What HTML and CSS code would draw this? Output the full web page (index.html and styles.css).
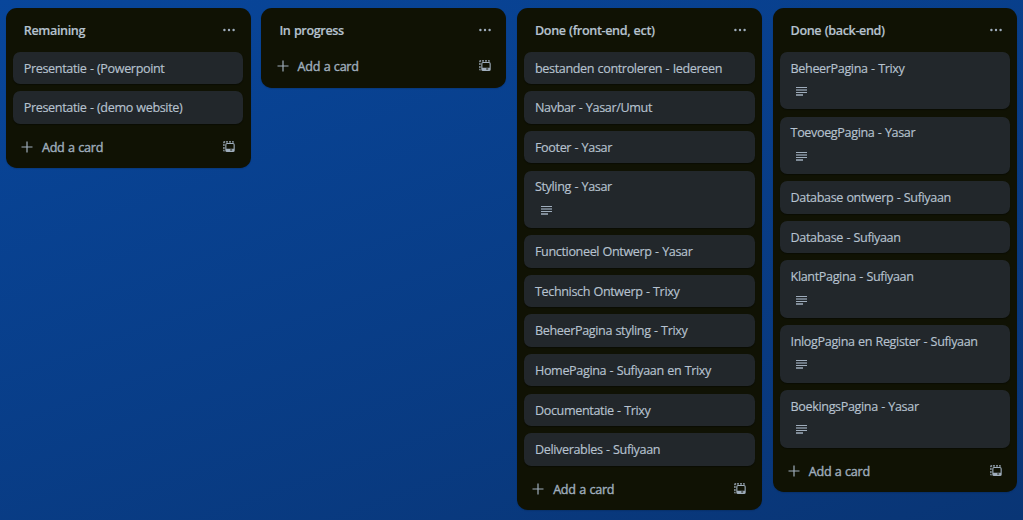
FILE: index.html
```
<!DOCTYPE html>
<html lang="nl">
<head>
<meta charset="utf-8">
<title>Board</title>
<link rel="stylesheet" href="styles.css">
</head>
<body>
<svg class="sprite" aria-hidden="true">
  <symbol id="dots" viewBox="0 0 12 4"><circle cx="1.4" cy="2" r="1.2"/><circle cx="6" cy="2" r="1.2"/><circle cx="10.6" cy="2" r="1.2"/></symbol>
  <symbol id="plus" viewBox="0 0 12 12"><path d="M5.4 .5h1.2v4.9h4.9v1.2H6.6v4.9H5.4V6.6H.5V5.4h4.9z"/></symbol>
  <symbol id="lines" viewBox="0 0 11 10"><path d="M0 0h11v1H0zM0 5h11v1H0zM0 7.200h7v1.500H0z"/><path opacity=".6" d="M0 2h11v2H0z"/></symbol>
  <symbol id="template" viewBox="0 0 12 12"><path d="M.3 2.200V1Q.3.3 1 .3h1.200v1.200H1.500v.7zM3 .3h2v1.200H3zM6 .3h2v1.200H6zM9 .3h1.200q.8 0 .8.700v.5H9zM.3 3h1.200v2H.3zM.3 6h1.200v2H.3zM.3 8.800h1.200v1.700H1Q.3 10.500.3 9.800z"/><path fill-rule="evenodd" d="M4 2h6q1.700 0 1.700 1.700v5.700q0 1.600-1.700 1.600H4q-1.700 0-1.700-1.600V3.700Q2.300 2 4 2zM4 3.100q-.600 0-.600.600V7.700h7.200V3.700q0-.600-.600-.600zM7.200 8.500v1.100h2V8.500z"/></symbol>
</svg>
<main class="board">
  <section class="list">
    <header class="list-header"><h2>Remaining</h2><svg class="dots"><use href="#dots"/></svg></header>
    <article class="card">Presentatie - (Powerpoint</article>
    <article class="card">Presentatie - (demo website)</article>
    <footer class="list-footer"><svg class="icon"><use href="#plus"/></svg><span>Add a card</span><svg class="icon"><use href="#template"/></svg></footer>
  </section>
  <section class="list">
    <header class="list-header"><h2>In progress</h2><svg class="dots"><use href="#dots"/></svg></header>
    <footer class="list-footer"><svg class="icon"><use href="#plus"/></svg><span>Add a card</span><svg class="icon"><use href="#template"/></svg></footer>
  </section>
  <section class="list">
    <header class="list-header"><h2>Done (front-end, ect)</h2><svg class="dots"><use href="#dots"/></svg></header>
    <article class="card">bestanden controleren - Iedereen</article>
    <article class="card">Navbar - Yasar/Umut</article>
    <article class="card">Footer - Yasar</article>
    <article class="card">Styling - Yasar<svg class="lines"><use href="#lines"/></svg></article>
    <article class="card">Functioneel Ontwerp - Yasar</article>
    <article class="card">Technisch Ontwerp - Trixy</article>
    <article class="card">BeheerPagina styling - Trixy</article>
    <article class="card">HomePagina - Sufiyaan en Trixy</article>
    <article class="card">Documentatie - Trixy</article>
    <article class="card">Deliverables - Sufiyaan</article>
    <footer class="list-footer"><svg class="icon"><use href="#plus"/></svg><span>Add a card</span><svg class="icon"><use href="#template"/></svg></footer>
  </section>
  <section class="list">
    <header class="list-header"><h2>Done (back-end)</h2><svg class="dots"><use href="#dots"/></svg></header>
    <article class="card">BeheerPagina - Trixy<svg class="lines"><use href="#lines"/></svg></article>
    <article class="card">ToevoegPagina - Yasar<svg class="lines"><use href="#lines"/></svg></article>
    <article class="card">Database ontwerp - Sufiyaan</article>
    <article class="card">Database - Sufiyaan</article>
    <article class="card">KlantPagina - Sufiyaan<svg class="lines"><use href="#lines"/></svg></article>
    <article class="card">InlogPagina en Register - Sufiyaan<svg class="lines"><use href="#lines"/></svg></article>
    <article class="card">BoekingsPagina - Yasar<svg class="lines"><use href="#lines"/></svg></article>
    <footer class="list-footer"><svg class="icon"><use href="#plus"/></svg><span>Add a card</span><svg class="icon"><use href="#template"/></svg></footer>
  </section>
</main>
</body>
</html>
```
FILE: styles.css
```
* { box-sizing: border-box; }
body {
  margin: 0;
  height: 520px;
  overflow: hidden;
  background: linear-gradient(160deg, #08469b 0%, #093575 100%);
  font: 12.6px/18px "Segoe UI", "Open Sans", "Noto Sans", sans-serif;
  letter-spacing: -0.37px;
  word-spacing: 0.5px;
  color: #b6c2cf;
  -webkit-text-stroke: 0.15px currentColor;
}
.sprite { display: none; }
.board {
  display: flex;
  align-items: flex-start;
  gap: 10.8px;
  padding: 8px 0 0 5.8px;
}
.list {
  flex: 0 0 244.8px;
  padding: 0 7.2px;
  border-radius: 10.8px;
  background: #101204;
  box-shadow: 0 1px 1px #091e4240;
}
.list-header {
  display: flex;
  align-items: center;
  justify-content: space-between;
  height: 43.8px;
  padding: 0 8.3px 0 10.8px;
}
h2 {
  margin: 0;
  padding-top: 1.4px;
  font-size: 12.6px;
  line-height: 18px;
  font-weight: 600;
}
svg { fill: #9fadbc; }
.dots { width: 12px; height: 4px; }
.card {
  min-height: 32.4px;
  margin-bottom: 7.2px;
  padding: 7.9px 10.8px 6.5px;
  border-radius: 7.2px;
  background: #22272b;
  box-shadow: 0 1px 1px #03040466;
}
.lines {
  display: block;
  width: 11px;
  height: 10px;
  margin: 9.2px 0 6px 5.7px;
}
.list-footer {
  display: flex;
  align-items: center;
  height: 36.6px;
  padding: 0 8.3px 8px 8px;
  letter-spacing: -0.27px;
  color: #9fadbc;
  -webkit-text-stroke: 0.4px currentColor;
}
.card + .list-footer { height: 37.4px; padding-bottom: 4.800px; }
.list-footer span { flex: 1; padding: 1px 0 0 9px; }
.icon { width: 12px; height: 12px; }
```
